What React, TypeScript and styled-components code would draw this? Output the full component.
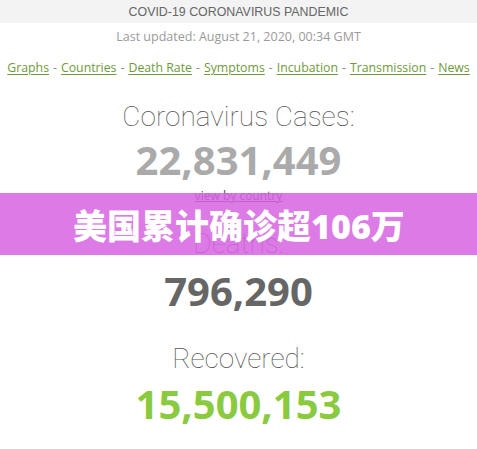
import React from 'react';
import styled, { createGlobalStyle } from 'styled-components';

const GlobalStyle = createGlobalStyle`
  html, body {
    margin: 0;
    padding: 0;
    background: #ffffff;
  }
  body {
    font-family: "Open Sans", "Liberation Sans", Arial, sans-serif;
  }
`;

const Page = styled.div`
  position: relative;
  width: 477px;
  height: 449px;
  overflow: hidden;
  background: #ffffff;
  text-align: center;
`;

const TopBar = styled.div`
  height: 23px;
  background: #f3f3f3;
  display: flex;
  align-items: center;
  justify-content: center;
  font-family: "Liberation Sans", Arial, sans-serif;
  font-size: 12.4px;
  color: #666;
`;

const Updated = styled.div`
  margin-top: 5px;
  height: 18px;
  line-height: 18px;
  font-size: 12.5px;
  color: #9a9a9a;
`;

const NavRow = styled.nav`
  margin-top: 13px;
  display: flex;
  justify-content: center;
  gap: 4px;
  font-size: 12.3px;
  color: #888;
  line-height: 18px;
`;

const NavLink = styled.a`
  color: #6f9a3a;
  text-decoration: underline;
  text-underline-offset: 2px;
`;

const Block = styled.div<{ $top: number }>`
  margin-top: ${p => p.$top}px;
  display: flex;
  flex-direction: column;
  align-items: center;
`;

const Label = styled.div`
  font-family: Roboto, "Liberation Sans", sans-serif;
  font-weight: 100;
  font-size: 28px;
  line-height: 32px;
  color: #555;
`;

const Count = styled.div<{ $color: string; $gap: number }>`
  margin-top: ${p => p.$gap}px;
  font-family: "Open Sans", "Liberation Sans", sans-serif;
  font-weight: 700;
  font-size: 40px;
  line-height: 46px;
  color: ${p => p.$color};
`;

const SmallLink = styled.a`
  margin-top: 6px;
  font-size: 12px;
  line-height: 14px;
  color: #444;
  text-decoration: underline;
`;

/* headline strip laid over the stats */
const Banner = styled.div`
  position: absolute;
  left: 0;
  right: 0;
  top: 193px;
  height: 62px;
  background: rgba(214, 100, 226, 0.86);
  display: flex;
  align-items: center;
  justify-content: center;
  color: #ffffff;
  font-family: "Open Sans", "Noto Sans CJK SC", sans-serif;
  font-weight: 800;
  font-size: 34px;
  padding-left: 1px;
`;

const links = ['Graphs', 'Countries', 'Death Rate', 'Symptoms', 'Incubation', 'Transmission', 'News'];

export default function App() {
  return (
    <Page>
      <GlobalStyle />
      <TopBar>COVID-19 CORONAVIRUS PANDEMIC</TopBar>
      <Updated>Last updated: August 21, 2020, 00:34 GMT</Updated>
      <NavRow>
        {links.map((l, i) => (
          <React.Fragment key={l}>
            {i > 0 && <span>-</span>}
            <NavLink href="#">{l}</NavLink>
          </React.Fragment>
        ))}
      </NavRow>

      <Block $top={24}>
        <Label>Coronavirus Cases:</Label>
        <Count $color="#aaaaaa" $gap={4}>22,831,449</Count>
        <SmallLink href="#">view by country</SmallLink>
      </Block>

      <Block $top={25}>
        <Label>Deaths:</Label>
        <Count $color="#666666" $gap={8}>796,290</Count>
      </Block>

      <Block $top={29}>
        <Label>Recovered:</Label>
        <Count $color="#8aca3e" $gap={6}>15,500,153</Count>
      </Block>

      <Banner>美国累计确诊超106万</Banner>
    </Page>
  );
}
